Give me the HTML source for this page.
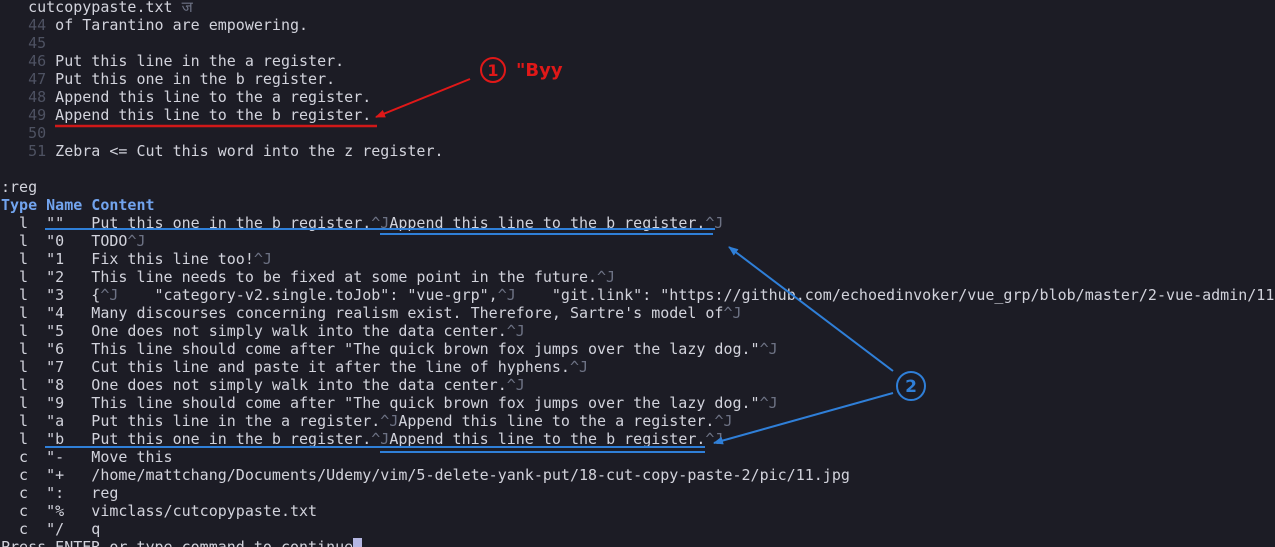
<!DOCTYPE html>
<html><head><meta charset="utf-8"><style>
html,body{margin:0;padding:0;background:#1c1c25;width:1275px;height:547px;overflow:hidden;position:relative}
pre{position:absolute;left:1px;top:-2px;margin:0;font-family:"DejaVu Sans Mono","Liberation Mono",monospace;font-size:15px;line-height:18px;color:#d2d3dc;white-space:pre}
.n{color:#4e5262}.g{color:#6d7284}.h{color:#72a4ee;font-weight:bold}.cur{background:#b4b6e2;color:#1c1c25}
svg{position:absolute;left:0;top:0}
</style></head><body>
<pre>   cutcopypaste.txt <span class="g">ज</span>
   <span class="n">44</span> of Tarantino are empowering.
   <span class="n">45</span>
   <span class="n">46</span> Put this line in the a register.
   <span class="n">47</span> Put this one in the b register.
   <span class="n">48</span> Append this line to the a register.
   <span class="n">49</span> Append this line to the b register.
   <span class="n">50</span>
   <span class="n">51</span> Zebra &lt;= Cut this word into the z register.

:reg
<span class="h">Type Name Content</span>
  l  ""   Put this one in the b register.<span class="g">^J</span>Append this line to the b register.<span class="g">^J</span>
  l  "0   TODO<span class="g">^J</span>
  l  "1   Fix this line too!<span class="g">^J</span>
  l  "2   This line needs to be fixed at some point in the future.<span class="g">^J</span>
  l  "3   {<span class="g">^J</span>    "category-v2.single.toJob": "vue-grp",<span class="g">^J</span>    "git.link": "https://github.com/echoedinvoker/vue_grp/blob/master/2-vue-admin/11-
  l  "4   Many discourses concerning realism exist. Therefore, Sartre's model of<span class="g">^J</span>
  l  "5   One does not simply walk into the data center.<span class="g">^J</span>
  l  "6   This line should come after "The quick brown fox jumps over the lazy dog."<span class="g">^J</span>
  l  "7   Cut this line and paste it after the line of hyphens.<span class="g">^J</span>
  l  "8   One does not simply walk into the data center.<span class="g">^J</span>
  l  "9   This line should come after "The quick brown fox jumps over the lazy dog."<span class="g">^J</span>
  l  "a   Put this line in the a register.<span class="g">^J</span>Append this line to the a register.<span class="g">^J</span>
  l  "b   Put this one in the b register.<span class="g">^J</span>Append this line to the b register.<span class="g">^J</span>
  c  "-   Move this
  c  "+   /home/mattchang/Documents/Udemy/vim/5-delete-yank-put/18-cut-copy-paste-2/pic/11.jpg
  c  ":   reg
  c  "%   vimclass/cutcopypaste.txt
  c  "/   q
Press ENTER or type command to continue<span class="cur"> </span></pre>
<svg width="1275" height="547">
<defs>
<marker id="ar" markerWidth="10" markerHeight="8" refX="9" refY="4" orient="auto" markerUnits="userSpaceOnUse"><path d="M0,0 L10,4 L0,8 Z" fill="#e01818"/></marker>
<marker id="ab" markerWidth="10" markerHeight="8" refX="9" refY="4" orient="auto" markerUnits="userSpaceOnUse"><path d="M0,0 L10,4 L0,8 Z" fill="#2f7fd8"/></marker>
</defs>
<line x1="55" y1="126" x2="377" y2="126" stroke="#d01818" stroke-width="2.5"/>
<line x1="470" y1="79" x2="376" y2="117" stroke="#e01818" stroke-width="2" marker-end="url(#ar)"/>
<circle cx="493" cy="70" r="12" fill="none" stroke="#e01818" stroke-width="2"/>
<text x="493" y="76" text-anchor="middle" font-family="DejaVu Sans,sans-serif" font-weight="bold" font-size="16" fill="#e01818">1</text>
<text x="516" y="76" font-family="DejaVu Sans,sans-serif" font-weight="bold" font-size="18" fill="#e01818">"Byy</text>
<g stroke="#2f7fd8" stroke-width="2">
<line x1="45" y1="229" x2="715" y2="229"/>
<line x1="380" y1="234" x2="713" y2="234"/>
<line x1="45" y1="447" x2="705" y2="447"/>
<line x1="380" y1="452" x2="705" y2="452"/>
<line x1="893" y1="371" x2="729" y2="247" marker-end="url(#ab)"/>
<line x1="893" y1="393" x2="714" y2="443" marker-end="url(#ab)"/>
</g>
<circle cx="911" cy="386" r="14" fill="none" stroke="#2f7fd8" stroke-width="2"/>
<text x="911" y="392" text-anchor="middle" font-family="DejaVu Sans,sans-serif" font-weight="bold" font-size="17" fill="#2f7fd8">2</text>
</svg>
</body></html>
